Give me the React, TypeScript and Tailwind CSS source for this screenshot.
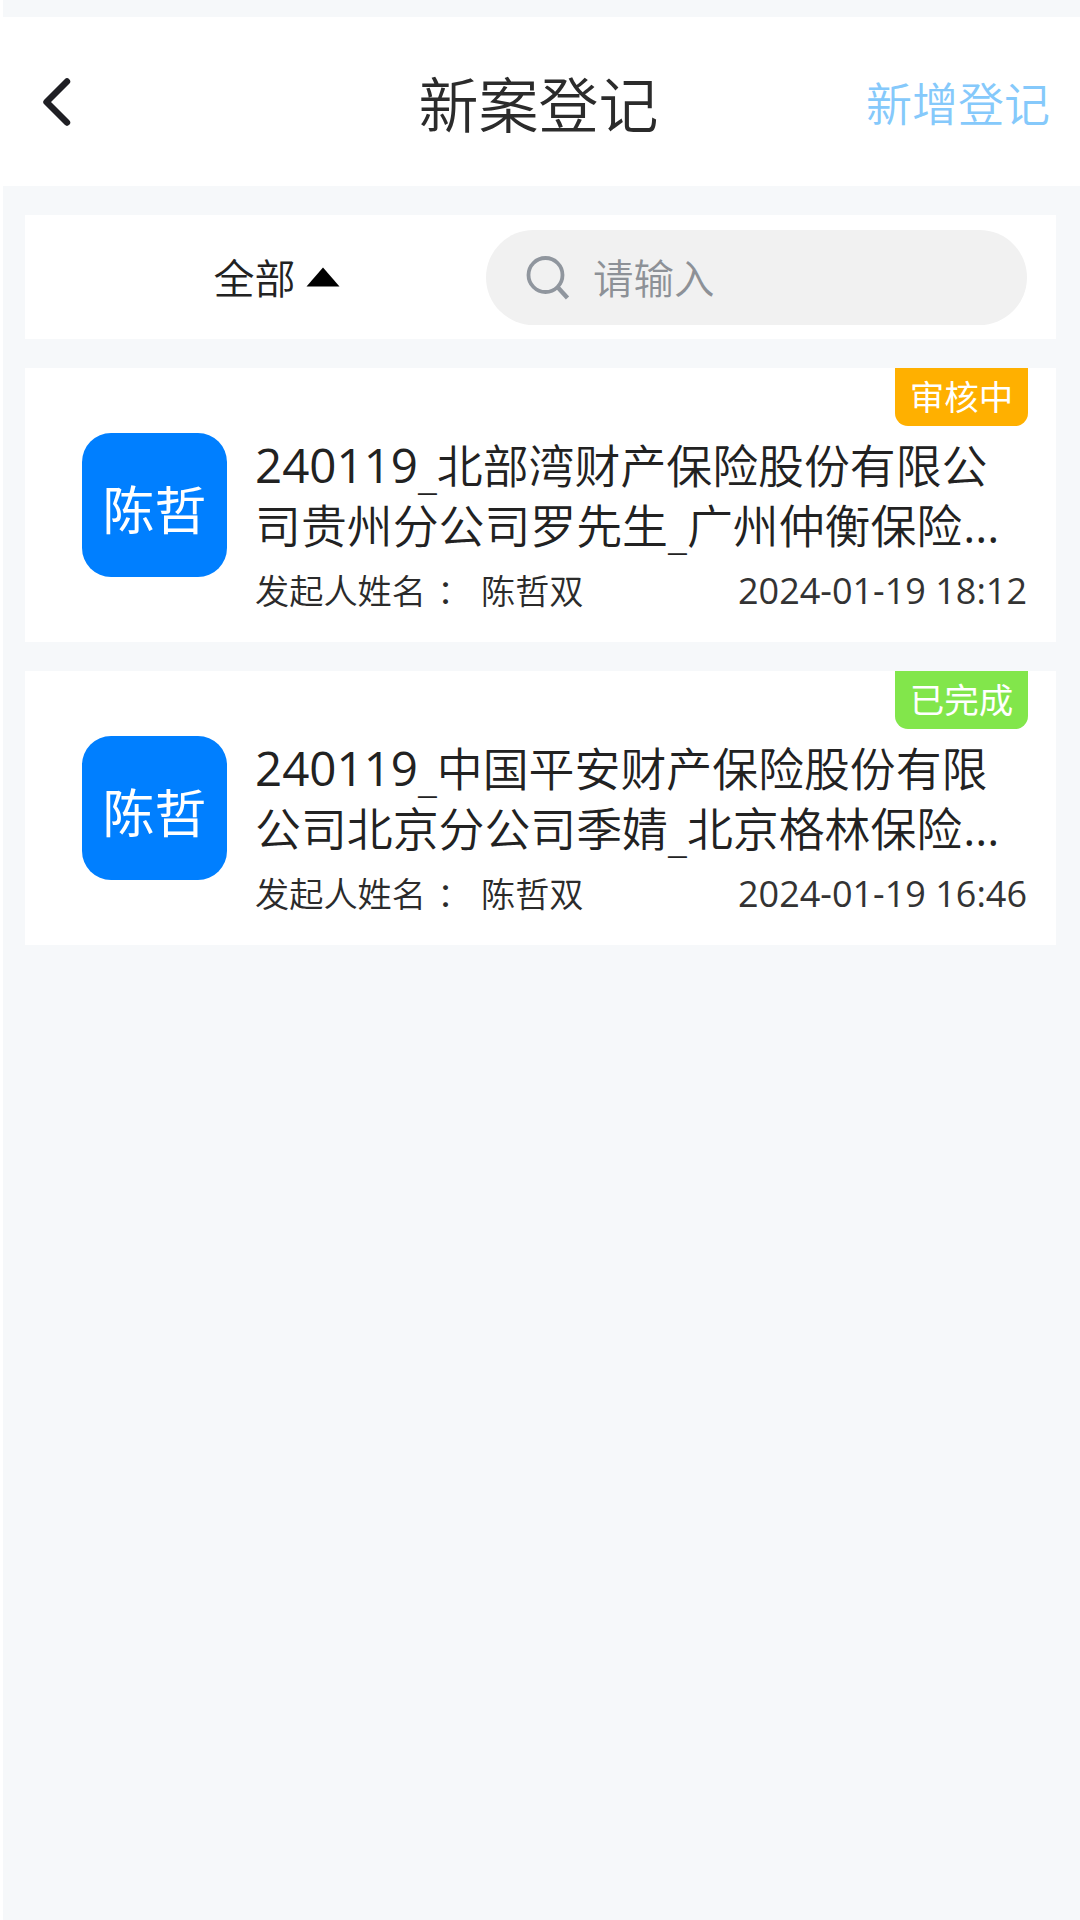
import { Fragment } from "react";

interface CaseRecord {
  id: number;
  code: string;
  lines: [string, string];
  initiator: string;
  createdAt: string;
  status: "pending" | "done";
}

const statusMap = {
  pending: { label: "审核中", className: "bg-[#ffb000]" },
  done: { label: "已完成", className: "bg-[#82e64b]" },
};

const records: CaseRecord[] = [
  {
    id: 1,
    code: "240119",
    lines: ["_北部湾财产保险股份有限公", "司贵州分公司罗先生_广州仲衡保险"],
    initiator: "陈哲双",
    createdAt: "2024-01-19 18:12",
    status: "pending",
  },
  {
    id: 2,
    code: "240119",
    lines: ["_中国平安财产保险股份有限", "公司北京分公司季婧_北京格林保险"],
    initiator: "陈哲双",
    createdAt: "2024-01-19 16:46",
    status: "done",
  },
];

function Header() {
  return (
    <header className="grid h-[169px] grid-cols-[1fr_auto_1fr] items-center bg-white pr-[30px] pl-[24px]">
      <button type="button" aria-label="返回" className="ml-[10px] justify-self-start">
        <svg width="40" height="56" viewBox="0 0 40 56" fill="none" className="block">
          <path
            d="M30 7.5 L9.5 28 L30 48.5"
            stroke="#1f1f24"
            strokeWidth="6.4"
            strokeLinecap="round"
            strokeLinejoin="round"
          />
        </svg>
      </button>
      <h1 className="pt-[6px] text-[60px] leading-[80px] font-[350] text-[#2b2b2b]">新案登记</h1>
      <button
        type="button"
        className="justify-self-end pt-[2px] text-[46px] leading-[60px] font-[350] text-[#85c9fb]"
      >
        新增登记
      </button>
    </header>
  );
}

function FilterBar() {
  return (
    <div className="flex h-[124px] items-center bg-white pr-[29px]">
      <button type="button" className="flex flex-1 items-center justify-center gap-[10px] pl-[42px]">
        <span className="pt-[2px] text-[41px] leading-[56px] font-[350] text-[#222]">全部</span>
        <svg width="34" height="20" viewBox="0 0 34 20" className="block">
          <path d="M17 0.5 L33.5 19.5 H0.5 Z" fill="#000" />
        </svg>
      </button>
      <div className="mt-px flex h-[95px] w-[541px] items-center rounded-full bg-[#f1f1f1] pl-[38px]">
        <svg width="46" height="46" viewBox="0 0 46 46" fill="none" stroke="#90969e" className="block">
          <circle cx="21.5" cy="20" r="17" strokeWidth="3.8" />
          <path d="M33.5 32 L43.5 43" strokeWidth="4.4" />
        </svg>
        <span className="pt-[3px] pl-[23px] text-[40.5px] leading-[56px] font-[350] text-[#8d9197]">请输入</span>
      </div>
    </div>
  );
}

// Underscores sit slightly below the baseline of the Chinese text
function TitleText({ text }: { text: string }) {
  return (
    <>
      {text.split("_").map((part, index) => (
        <Fragment key={index}>
          {index > 0 && <span className="relative top-[6px]">_</span>}
          {part}
        </Fragment>
      ))}
    </>
  );
}

function CaseCard({ record }: { record: CaseRecord }) {
  const status = statusMap[record.status];

  return (
    <article className="relative flex h-[274px] items-start bg-white pt-[65px] pr-[28px] pl-[57px]">
      <span
        className={`absolute top-0 right-[28px] flex h-[58px] w-[133px] items-center justify-center rounded-b-[13px] text-[34.5px] leading-[48px] text-white ${status.className}`}
      >
        {status.label}
      </span>
      <div className="flex h-[144px] w-[145px] shrink-0 items-center justify-center rounded-[29px] bg-[#007fff] pt-[10px] text-[52px] leading-[60px] text-white">
        {record.initiator.slice(0, 2)}
      </div>
      <div className="mt-[2px] ml-[28px] flex-1">
        <h2 className="text-[45.9px] leading-[60px] font-[350] whitespace-nowrap text-[#222]">
          <span className="block h-[60px]">
            <span className="text-[47.5px] font-normal">{record.code}</span>
            <TitleText text={record.lines[0]} />
          </span>
          <span className="block h-[60px]">
            <TitleText text={record.lines[1]} />
            <span className="pl-px font-normal">...</span>
          </span>
        </h2>
        <div className="mt-[12px] flex h-[48px] items-center justify-between leading-[48px] font-[350] whitespace-nowrap text-[#2b2b2b]">
          <p className="flex text-[34.2px]">
            <span>发起人姓名</span>
            <span className="w-[55px] pl-[11px]">：</span>
            <span>{record.initiator}</span>
          </p>
          <time className="mr-px text-[36px] font-normal text-[#333]">{record.createdAt}</time>
        </div>
      </div>
    </article>
  );
}

export default function App() {
  return (
    <div className="h-[1920px] w-[1080px] overflow-hidden border-l-[3px] border-white bg-[#f6f8fa] pt-[17px] font-['Open_Sans','Noto_Sans_CJK_SC',sans-serif]">
      <Header />
      <main className="flex flex-col gap-[29px] pt-[29px] pr-[24px] pl-[22px]">
        <FilterBar />
        {records.map((record) => (
          <CaseCard key={record.id} record={record} />
        ))}
      </main>
    </div>
  );
}
